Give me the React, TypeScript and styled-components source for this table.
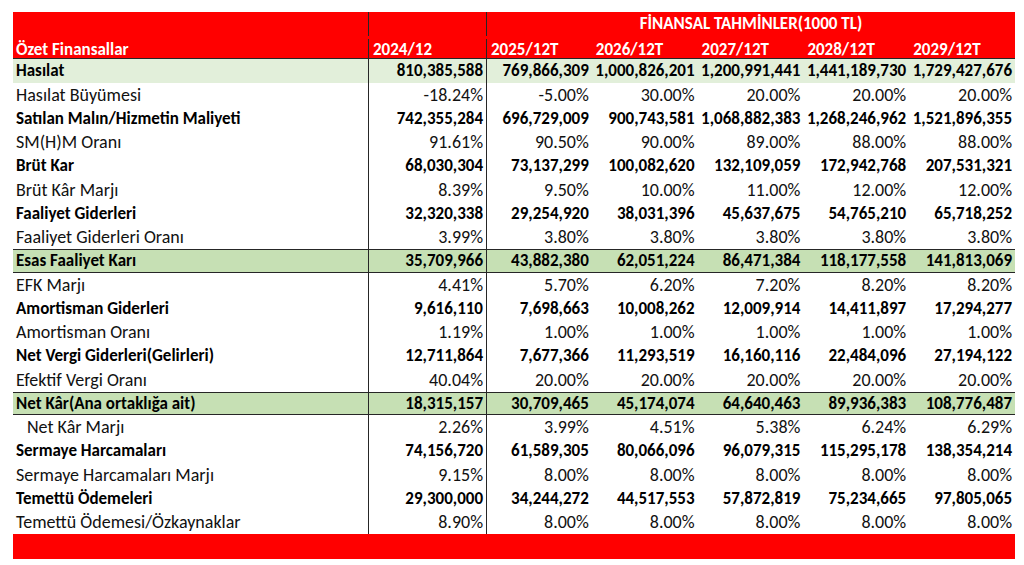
import * as React from 'react'
import styled, { createGlobalStyle } from 'styled-components'

const GlobalStyle = createGlobalStyle`
  html, body {
    margin: 0;
    padding: 0;
    background: #ffffff;
  }
  body {
    font-family: Carlito, Lato, "Liberation Sans", sans-serif;
  }
`

// kolon genişlikleri: etiket, 2024, 5 tahmin yılı
const Columns = '355px 118px repeat(5, 1fr)'
const LineColor = '#262626'

const Page = styled.div`
  padding: 12px 9px 0 13px;
  width: 1002px;
`

const Table = styled.div`
  display: flex;
  flex-direction: column;
  font-size: 17px;
  color: #111111;
`

const HeaderRow = styled.div<{ $last?: boolean }>`
  display: grid;
  grid-template-columns: ${Columns};
  height: 23.5px;
  background: #ff0000;
  color: #ffffff;
  font-weight: 700;
  box-sizing: border-box;
  padding-top: ${(p) => (p.$last ? '3px' : '0')};
  border-bottom: ${(p) => (p.$last ? `1.5px solid ${LineColor}` : 'none')};
`

const HeadCell = styled.div<{ $divider?: boolean; $span?: number; $center?: boolean }>`
  display: flex;
  align-items: center;
  justify-content: ${(p) => (p.$center ? 'center' : 'flex-start')};
  padding-left: ${(p) => (p.$center ? '0' : '4px')};
  grid-column: ${(p) => (p.$span ? `span ${p.$span}` : 'auto')};
  border-left: ${(p) => (p.$divider ? `1.5px solid ${LineColor}` : 'none')};
  white-space: nowrap;
`

const TitleCell = styled(HeadCell)`
  padding-left: 3px;
`

type Tone = 'plain' | 'light' | 'strong'

const Row = styled.div<{ $tone: Tone }>`
  display: grid;
  grid-template-columns: ${Columns};
  height: 23.75px;
  box-sizing: border-box;
  background: ${(p) =>
    p.$tone === 'light' ? '#e2efda' : p.$tone === 'strong' ? '#c6e0b4' : '#ffffff'};
  border-top: ${(p) => (p.$tone === 'strong' ? `1.5px solid ${LineColor}` : 'none')};
  border-bottom: ${(p) => (p.$tone === 'strong' ? `1.5px solid ${LineColor}` : 'none')};
`

const Label = styled.div<{ $bold?: boolean; $indent?: boolean }>`
  display: flex;
  align-items: center;
  padding-left: ${(p) => (p.$indent ? '14px' : '3px')};
  font-weight: ${(p) => (p.$bold ? 700 : 400)};
  font-size: ${(p) => (p.$bold ? '17px' : '18px')};
  color: ${(p) => (p.$bold ? '#000000' : '#111111')};
  white-space: nowrap;
`

const Value = styled.div<{ $bold?: boolean; $divider?: boolean }>`
  display: flex;
  align-items: center;
  justify-content: flex-end;
  padding-right: 3px;
  font-weight: ${(p) => (p.$bold ? 700 : 400)};
  font-size: ${(p) => (p.$bold ? '17px' : '18px')};
  color: ${(p) => (p.$bold ? '#000000' : '#111111')};
  border-left: ${(p) => (p.$divider ? `1.5px solid ${LineColor}` : 'none')};
  white-space: nowrap;
`

const FooterBar = styled.div`
  height: 25px;
  background: #ff0000;
`

type Line = {
  label: string
  values: string[]
  bold?: boolean
  tone?: Tone
  indent?: boolean
}

const years = ['2025/12T', '2026/12T', '2027/12T', '2028/12T', '2029/12T']

const pct = (first: string, rest: string) => [first, rest, rest, rest, rest, rest]

const lines: Line[] = [
  {
    label: 'Hasılat',
    bold: true,
    tone: 'light',
    values: ['810,385,588', '769,866,309', '1,000,826,201', '1,200,991,441', '1,441,189,730', '1,729,427,676'],
  },
  { label: 'Hasılat Büyümesi', values: ['-18.24%', '-5.00%', '30.00%', '20.00%', '20.00%', '20.00%'] },
  {
    label: 'Satılan Malın/Hizmetin Maliyeti',
    bold: true,
    values: ['742,355,284', '696,729,009', '900,743,581', '1,068,882,383', '1,268,246,962', '1,521,896,355'],
  },
  { label: 'SM(H)M Oranı', values: ['91.61%', '90.50%', '90.00%', '89.00%', '88.00%', '88.00%'] },
  {
    label: 'Brüt Kar',
    bold: true,
    values: ['68,030,304', '73,137,299', '100,082,620', '132,109,059', '172,942,768', '207,531,321'],
  },
  { label: 'Brüt Kâr Marjı', values: ['8.39%', '9.50%', '10.00%', '11.00%', '12.00%', '12.00%'] },
  {
    label: 'Faaliyet Giderleri',
    bold: true,
    values: ['32,320,338', '29,254,920', '38,031,396', '45,637,675', '54,765,210', '65,718,252'],
  },
  { label: 'Faaliyet Giderleri Oranı', values: pct('3.99%', '3.80%') },
  {
    label: 'Esas Faaliyet Karı',
    bold: true,
    tone: 'strong',
    values: ['35,709,966', '43,882,380', '62,051,224', '86,471,384', '118,177,558', '141,813,069'],
  },
  { label: 'EFK Marjı', values: ['4.41%', '5.70%', '6.20%', '7.20%', '8.20%', '8.20%'] },
  {
    label: 'Amortisman Giderleri',
    bold: true,
    values: ['9,616,110', '7,698,663', '10,008,262', '12,009,914', '14,411,897', '17,294,277'],
  },
  { label: 'Amortisman Oranı', values: pct('1.19%', '1.00%') },
  {
    label: 'Net Vergi Giderleri(Gelirleri)',
    bold: true,
    values: ['12,711,864', '7,677,366', '11,293,519', '16,160,116', '22,484,096', '27,194,122'],
  },
  { label: 'Efektif Vergi Oranı', values: pct('40.04%', '20.00%') },
  {
    label: 'Net Kâr(Ana ortaklığa ait)',
    bold: true,
    tone: 'strong',
    values: ['18,315,157', '30,709,465', '45,174,074', '64,640,463', '89,936,383', '108,776,487'],
  },
  { label: 'Net Kâr Marjı', indent: true, values: ['2.26%', '3.99%', '4.51%', '5.38%', '6.24%', '6.29%'] },
  {
    label: 'Sermaye Harcamaları',
    bold: true,
    values: ['74,156,720', '61,589,305', '80,066,096', '96,079,315', '115,295,178', '138,354,214'],
  },
  { label: 'Sermaye Harcamaları Marjı', values: pct('9.15%', '8.00%') },
  {
    label: 'Temettü Ödemeleri',
    bold: true,
    values: ['29,300,000', '34,244,272', '44,517,553', '57,872,819', '75,234,665', '97,805,065'],
  },
  { label: 'Temettü Ödemesi/Özkaynaklar', values: pct('8.90%', '8.00%') },
]

export default function App() {
  return (
    <>
      <GlobalStyle />
      <Page>
        <Table>
          <HeaderRow>
            <TitleCell />
            <HeadCell $divider />
            <HeadCell $divider $span={5} $center>
              FİNANSAL TAHMİNLER(1000 TL)
            </HeadCell>
          </HeaderRow>
          <HeaderRow $last>
            <TitleCell>Özet Finansallar</TitleCell>
            <HeadCell $divider>2024/12</HeadCell>
            {years.map((y, i) => (
              <HeadCell key={y} $divider={i === 0}>
                {y}
              </HeadCell>
            ))}
          </HeaderRow>
          {lines.map((line) => (
            <Row key={line.label} $tone={line.tone || 'plain'}>
              <Label $bold={line.bold} $indent={line.indent}>
                {line.label}
              </Label>
              {line.values.map((v, i) => (
                <Value key={i} $bold={line.bold} $divider={i < 2}>
                  {v}
                </Value>
              ))}
            </Row>
          ))}
          <FooterBar />
        </Table>
      </Page>
    </>
  )
}
